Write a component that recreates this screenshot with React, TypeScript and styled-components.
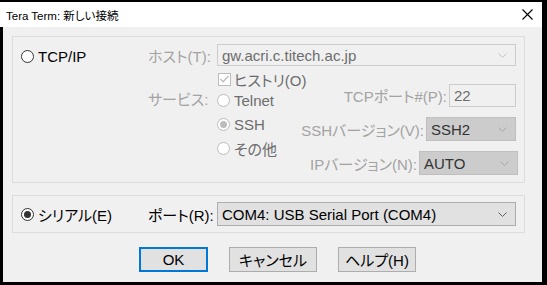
import React from 'react';
import styled, { createGlobalStyle, css } from 'styled-components';

const GlobalStyle = createGlobalStyle`
	html, body {
		margin: 0;
		padding: 0;
		background: #000;
	}
	body {
		font-family: "Liberation Sans", "Noto Sans CJK JP", sans-serif;
		font-size: 15px;
		font-feature-settings: "palt";
	}
`;

const UI_FONT = `"Liberation Sans", "Noto Sans CJK JP", sans-serif`;

const Window = styled.div`
	width: 542px;
	height: 280px;
	margin-top: 2px;
	display: flex;
	flex-direction: column;
`;

const TitleBar = styled.div`
	height: 25px;
	flex: none;
	background: #fff;
	display: flex;
	align-items: center;
	justify-content: space-between;
	padding: 0 9px 0 6px;
	font-family: ${UI_FONT};
	font-size: 11.5px;
	color: #000;
`;

const Body = styled.div`
	flex: 1;
	margin-left: 3px;
	background: #f0f0f0;
	padding: 9px 17px 0 9px;
	font-family: ${UI_FONT};
	font-size: 15px;
	color: #000;
`;

const Group = styled.div<{ $height: number; $center?: boolean }>`
	box-sizing: border-box;
	height: ${(p) => p.$height}px;
	border: 1px solid #dcdcdc;
	display: flex;
	align-items: ${(p) => (p.$center ? 'center' : 'stretch')};
	& + & {
		margin-top: 12px;
	}
`;

const LeftCol = styled.div<{ $top?: number }>`
	width: 135px;
	flex: none;
	padding-left: 8px;
	box-sizing: border-box;
	padding-top: ${(p) => p.$top ?? 0}px;
`;

const RightCol = styled.div`
	flex: 1;
	min-width: 0;
	padding-right: 8px;
	display: flex;
	flex-direction: column;
`;

const Row = styled.div<{ $height?: number; $top?: number; $indent?: number }>`
	display: flex;
	align-items: center;
	height: ${(p) => (p.$height ? `${p.$height}px` : 'auto')};
	margin-top: ${(p) => p.$top ?? 0}px;
	padding-left: ${(p) => p.$indent ?? 0}px;
`;

const ServiceRow = styled.div`
	display: flex;
	align-items: flex-start;
	margin-top: 1px;
`;

const Label = styled.span<{ $disabled?: boolean; $width?: number }>`
	white-space: nowrap;
	color: ${(p) => (p.$disabled ? '#a3a3a3' : '#000')};
	${(p) =>
		p.$width &&
		css`
			width: ${p.$width}px;
			flex: none;
		`}
`;

const ServiceLabel = styled(Label)`
	height: 24px;
	line-height: 24px;
`;

const Circle = styled.span<{ $checked?: boolean; $disabled?: boolean }>`
	box-sizing: border-box;
	width: 13px;
	height: 13px;
	flex: none;
	border-radius: 50%;
	border: 1px solid ${(p) => (p.$disabled ? '#bcbcbc' : '#333')};
	background: #fff;
	display: flex;
	align-items: center;
	justify-content: center;
	margin-right: 4px;

	&::after {
		content: '';
		display: ${(p) => (p.$checked ? 'block' : 'none')};
		width: 7px;
		height: 7px;
		border-radius: 50%;
		background: ${(p) => (p.$disabled ? '#bcbcbc' : '#333')};
	}
`;

const OptionText = styled.span<{ $disabled?: boolean }>`
	white-space: nowrap;
	color: ${(p) => (p.$disabled ? '#6d6d6d' : '#000')};
`;

const Box = styled.span`
	box-sizing: border-box;
	width: 13px;
	height: 13px;
	flex: none;
	border: 1px solid #bcbcbc;
	background: #fff;
	margin-right: 3px;
	display: flex;
	align-items: center;
	justify-content: center;
`;

type FieldKind = 'disabled' | 'list' | 'active';

const Field = styled.div<{ $kind: FieldKind; $width?: number; $height: number }>`
	box-sizing: border-box;
	height: ${(p) => p.$height}px;
	${(p) => (p.$width ? `width: ${p.$width}px; flex: none;` : 'flex: 1;')}
	display: flex;
	align-items: center;
	justify-content: space-between;
	padding: 0 8px 0 4px;
	white-space: nowrap;
	${(p) =>
		p.$kind === 'disabled'
			? css`
					border: 1px solid #cccccc;
					background: #f0f0f0;
					color: #6d6d6d;
			  `
			: p.$kind === 'list'
			? css`
					border: 1px solid #bfbfbf;
					background: #cccccc;
					color: #333;
			  `
			: css`
					border: 1px solid #adadad;
					background: #e1e1e1;
					color: #000;
			  `}
`;

const Lower = styled.div`
	display: flex;
	justify-content: space-between;
`;

const Services = styled.div`
	flex: 1;
	min-width: 0;
	display: flex;
	flex-direction: column;
`;

const RadioList = styled.div`
	display: flex;
	flex-direction: column;
`;

const Fields = styled.div`
	flex: none;
	display: flex;
	flex-direction: column;
	align-items: flex-end;
	margin-top: 18px;
	gap: 10px;
`;

const FieldRow = styled.div<{ $shift?: number }>`
	display: flex;
	align-items: center;
	gap: 2px;
	margin-right: ${(p) => -(p.$shift ?? 0)}px;
`;

const ButtonRow = styled.div`
	display: flex;
	gap: 21px;
	margin-top: 14px;
	padding-left: 127px;
`;

const Button = styled.div<{ $width: number; $default?: boolean }>`
	box-sizing: border-box;
	width: ${(p) => p.$width}px;
	height: 25px;
	background: #e1e1e1;
	border: ${(p) => (p.$default ? '2px solid #0078d7' : '1px solid #adadad')};
	display: flex;
	align-items: center;
	justify-content: center;
	white-space: nowrap;
`;

const Chevron = ({ color }: { color: string }) => (
	<svg width="9" height="5" viewBox="0 0 9 5">
		<path d="M0.5 0.5 L4.5 4.5 L8.5 0.5" fill="none" stroke={color} strokeWidth="1" />
	</svg>
);

const CloseIcon = () => (
	<svg width="11" height="11" viewBox="0 0 11 11">
		<path d="M0.5 0.5 L10.5 10.5 M10.5 0.5 L0.5 10.5" stroke="#000" strokeWidth="1.1" />
	</svg>
);

const CheckMark = () => (
	<svg width="9" height="8" viewBox="0 0 9 8">
		<path d="M0.5 4 L3.2 6.8 L8.5 0.8" fill="none" stroke="#bcbcbc" strokeWidth="1.3" />
	</svg>
);

const Radio = ({ label, checked, disabled }: { label: string; checked?: boolean; disabled?: boolean }) => (
	<Row $height={24}>
		<Circle $checked={checked} $disabled={disabled} />
		<OptionText $disabled={disabled}>{label}</OptionText>
	</Row>
);

const App = () => {
	return (
		<>
			<GlobalStyle />
			<Window>
				<TitleBar>
					<span>Tera Term: 新しい接続</span>
					<CloseIcon />
				</TitleBar>
				<Body>
					<Group $height={147}>
						<LeftCol $top={7}>
							<Radio label="TCP/IP" />
						</LeftCol>
						<RightCol>
							<Row $height={22} $top={7}>
								<Label $disabled $width={69}>
									ホスト(T):
								</Label>
								<Field $kind="disabled" $height={22}>
									<span>gw.acri.c.titech.ac.jp</span>
									<Chevron color="#c4c4c4" />
								</Field>
							</Row>
							<Lower>
								<Services>
									<Row $height={16} $top={5} $indent={70}>
										<Box>
											<CheckMark />
										</Box>
										<OptionText $disabled>ヒストリ(O)</OptionText>
									</Row>
									<ServiceRow>
										<ServiceLabel $disabled $width={69}>
											サービス:
										</ServiceLabel>
										<RadioList>
											<Radio label="Telnet" disabled />
											<Radio label="SSH" checked disabled />
											<Radio label="その他" disabled />
										</RadioList>
									</ServiceRow>
								</Services>
								<Fields>
									<FieldRow>
										<Label $disabled>TCPポート#(P):</Label>
										<Field $kind="disabled" $width={67} $height={23}>
											<span>22</span>
										</Field>
									</FieldRow>
									<FieldRow>
										<Label $disabled>SSHバージョン(V):</Label>
										<Field $kind="list" $width={90} $height={24}>
											<span>SSH2</span>
											<Chevron color="#a8a8a8" />
										</Field>
									</FieldRow>
									<FieldRow $shift={2}>
										<Label $disabled>IPバージョン(N):</Label>
										<Field $kind="list" $width={99} $height={24}>
											<span>AUTO</span>
											<Chevron color="#a8a8a8" />
										</Field>
									</FieldRow>
								</Fields>
							</Lower>
						</RightCol>
					</Group>
					<Group $height={38} $center>
						<LeftCol>
							<Radio label="シリアル(E)" checked />
						</LeftCol>
						<RightCol>
							<Row>
								<Label $width={69}>ポート(R):</Label>
								<Field $kind="active" $height={24}>
									<span>COM4: USB Serial Port (COM4)</span>
									<Chevron color="#606060" />
								</Field>
							</Row>
						</RightCol>
					</Group>
					<ButtonRow>
						<Button $width={69} $default>
							OK
						</Button>
						<Button $width={88}>キャンセル</Button>
						<Button $width={78}>ヘルプ(H)</Button>
					</ButtonRow>
				</Body>
			</Window>
		</>
	);
};

export default App;
